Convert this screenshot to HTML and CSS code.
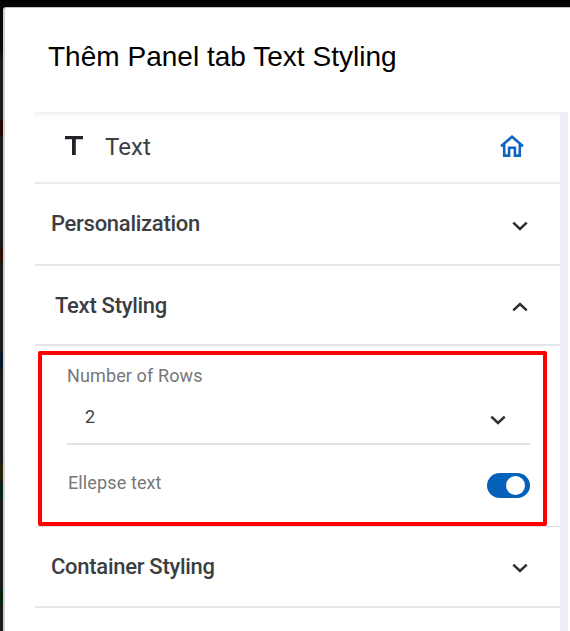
FILE: index.html
```html
<!DOCTYPE html>
<html lang="vi">
<head>
<meta charset="utf-8">
<title>Text Styling</title>
<link rel="stylesheet" href="styles.css">
</head>
<body>
<main class="modal">
  <h1 class="title"><span>Thêm Panel tab Text Styling</span></h1>
  <div class="preview">
    <section class="panel">
      <header class="head">
        <svg class="type-icon" viewBox="0 0 18 19"><path d="M0 0H18V3.2H10.8V19H7V3.2H0Z" fill="#222328"/></svg>
        <span class="head-label">Text</span>
        <svg class="home" viewBox="0 0 24 22" fill="none" stroke="#1264bd" stroke-width="2.6"><path d="M1 11.2L12 1.8L23 11.2M4.2 9V20.6H9.1V12.8H14.9V20.6H19.8V9"/></svg>
      </header>
      <div class="row personalization"><span>Personalization</span><svg class="chevron" viewBox="0 0 16 10"><path d="M1.3 1.6L8 8L14.7 1.6"/></svg></div>
      <div class="row styling"><span>Text Styling</span><svg class="chevron" viewBox="0 0 16 10"><path d="M1.3 8.4L8 2L14.7 8.4"/></svg></div>
      <div class="content">
        <div class="options">
          <div class="label rows-label"><span>Number of Rows</span></div>
          <div class="select"><span>2</span><svg class="chevron" viewBox="0 0 16 10"><path d="M1.3 1.6L8 8L14.7 1.6"/></svg></div>
          <div class="ellipsis"><span class="label">Ellepse text</span><span class="toggle"></span></div>
        </div>
      </div>
      <div class="row container"><span>Container Styling</span><svg class="chevron" viewBox="0 0 16 10"><path d="M1.3 1.6L8 8L14.7 1.6"/></svg></div>
    </section>
    <div class="track"></div>
  </div>
</main>
</body>
</html>
```

FILE: styles.css
```css
* { box-sizing: border-box; }
body {
  margin: 0;
  height: 631px;
  overflow: hidden;
  padding: 7px 0 0 3px;
  background:
    linear-gradient(#270505, #270505) 0 120px / 3px 16px no-repeat,
    linear-gradient(#2b0e04, #2b0e04) 0 247px / 3px 15px no-repeat,
    linear-gradient(#03172b, #03172b) 0 353px / 3px 16px no-repeat,
    linear-gradient(#272504, #272504) 0 463px / 3px 16px no-repeat,
    linear-gradient(#06251a, #06251a) 0 483px / 3px 16px no-repeat,
    linear-gradient(#062308, #062308) 0 589px / 3px 16px no-repeat,
    linear-gradient(#000 0, #07070b 7px, #0b0b10 50px, #1b1b1d 60px, #1b1b1d 100%);
  font-family: Roboto, "Liberation Sans", sans-serif;
  color: #3c3e42;
}
.modal {
  height: 624px;
  background: #fff;
  border-top: 1px solid #c4c4c6;
  border-left: 2px solid #d0d0d4;
  border-top-left-radius: 3px;
}
.title {
  margin: 0;
  height: 104px;
  padding: 33px 0 0 43px;
  font: 400 28px/32px "Liberation Sans", Arial, sans-serif;
  letter-spacing: 0.02px;
  color: #000;
  white-space: nowrap;
}
.preview { display: flex; height: 519px; padding-left: 30px; }
.panel {
  width: 525px;
  background: linear-gradient(#efefef, #fafafa 3px, #fff 6px);
}
.track { width: 8px; background: #ededf8; }
.head {
  display: flex;
  align-items: center;
  height: 72px;
  padding: 0 36px 0 30px;
  border-bottom: 2px solid #ebebeb;
}
.type-icon { width: 18px; height: 19px; margin-top: -3px; }
.head-label { margin-left: 22px; font-size: 24px; letter-spacing: 0.1px; }
.home { width: 24px; height: 22px; margin-left: auto; margin-top: -2px; }
.row {
  display: flex;
  align-items: center;
  justify-content: space-between;
  padding: 0 32px 0 16px;
  border-bottom: 2px solid #e6e6e6;
  font-size: 22px;
  font-weight: 500;
  letter-spacing: -0.28px;
}
.personalization { height: 82px; }
.personalization span { margin-top: -1px; }
.styling { height: 80px; padding-left: 20px; }
.container { height: 81px; }
.container span { margin-top: -1px; }
.chevron {
  width: 16px;
  height: 10px;
  margin-top: 3px;
  fill: none;
  stroke: #2f3035;
  stroke-width: 2.6;
}
.content { height: 181px; padding: 5px 0 0 3px; border-bottom: 1px solid #dedede; }
.options {
  width: 509px;
  height: 175px;
  padding: 10px 13px 0 25px;
  border: 4px solid #f00;
  border-radius: 2px;
}
.label { font-size: 18px; line-height: 21px; letter-spacing: 0.12px; color: #76777a; }
.select {
  display: flex;
  align-items: center;
  justify-content: space-between;
  height: 59px;
  padding: 4px 24px 0 18px;
  border-bottom: 2px solid #e2e2e2;
  font-size: 18px;
}
.select .chevron { margin-top: 6px; }
.ellipsis { display: flex; align-items: center; justify-content: space-between; height: 77px; }
.ellipsis .label { margin-top: -3px; padding-left: 1px; }
.toggle {
  display: flex;
  justify-content: flex-end;
  width: 43px;
  height: 25px;
  margin-top: 4px;
  padding: 3px 5px;
  border-radius: 13px;
  background: #0361b9;
}
.toggle::after { content: ""; width: 19px; height: 19px; border-radius: 50%; background: #fff; }
```
